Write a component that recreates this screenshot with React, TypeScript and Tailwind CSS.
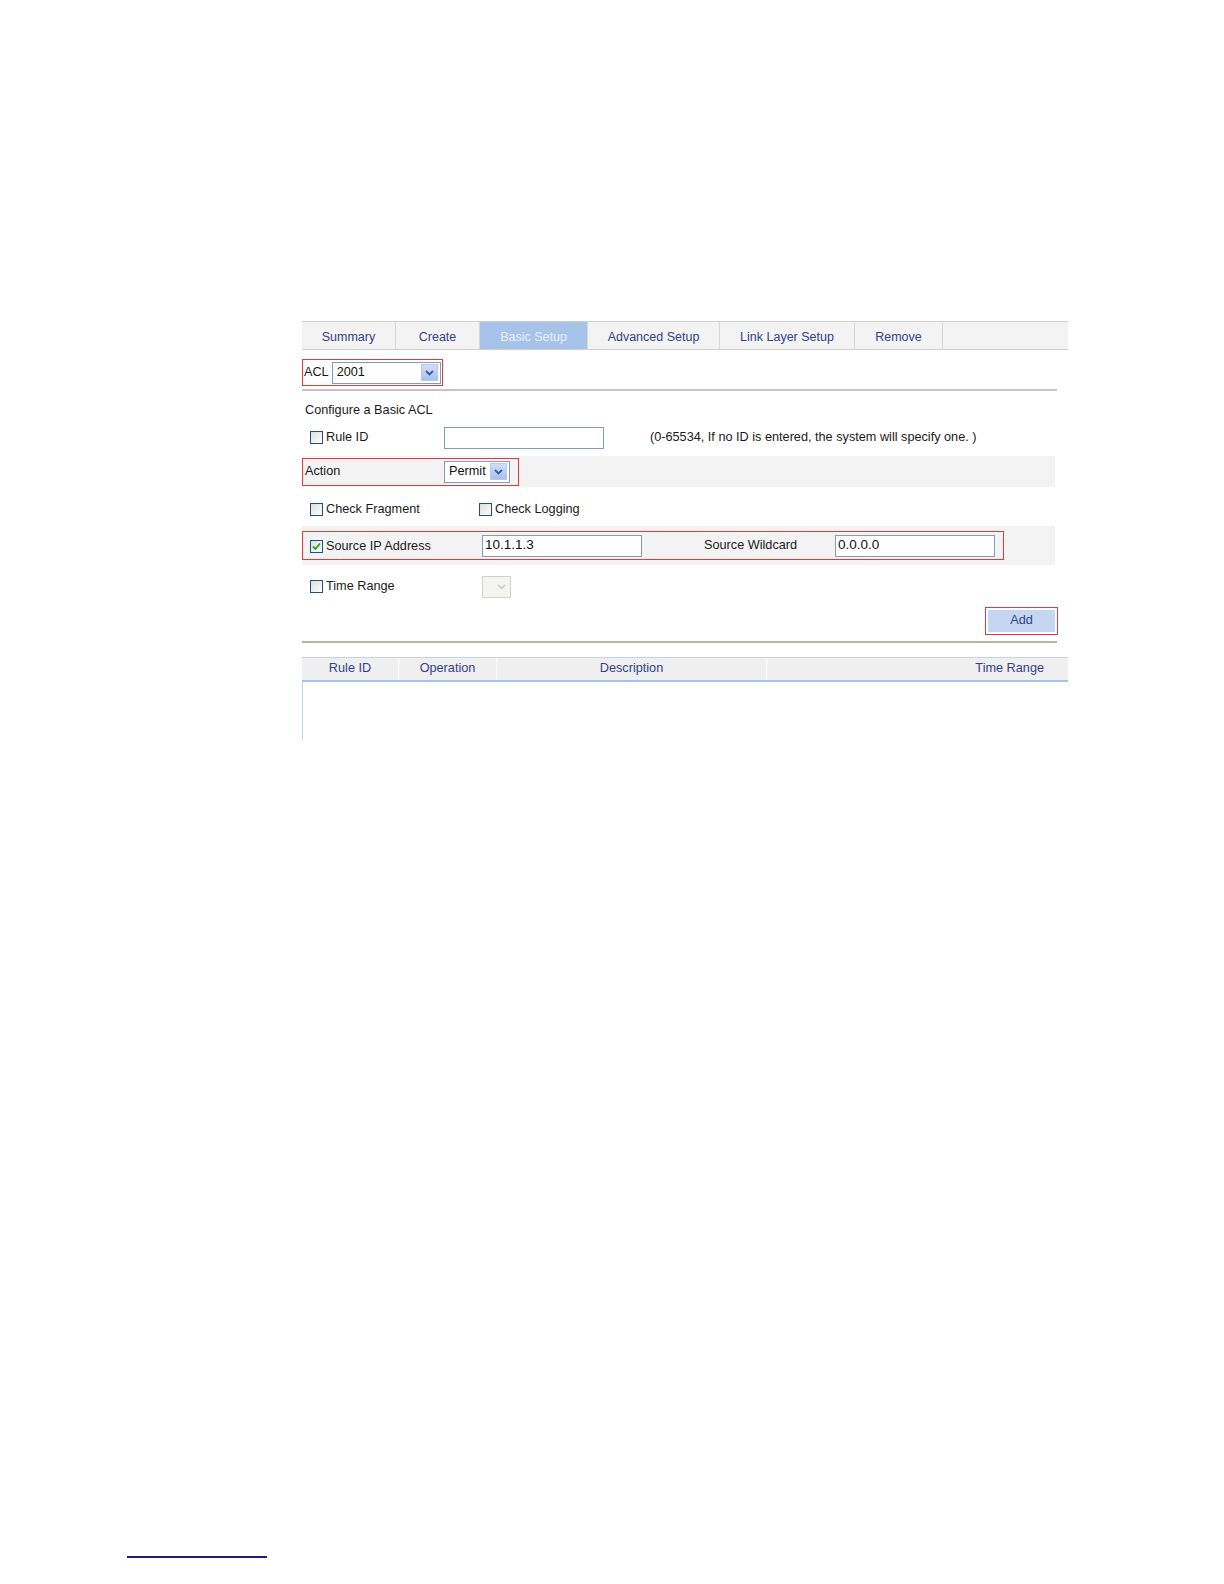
import React from "react";

const Check = ({ checked = false }: { checked?: boolean }) => (
  <span className="inline-flex h-[13px] w-[13px] shrink-0 items-center justify-center border border-[#1c5180] bg-gradient-to-br from-[#dcdcd7] to-[#ffffff]">
    {checked && (
      <svg width="9" height="9" viewBox="0 0 9 9">
        <path d="M1 4.5 L3.5 7 L8 1.5" fill="none" stroke="#21a121" strokeWidth="1.8" />
      </svg>
    )}
  </span>
);

const DropBtn = () => (
  <span className="flex h-[17px] w-[17px] items-center justify-center border border-[#b4c8f0] bg-gradient-to-b from-[#d0def9] to-[#a8c0f0]">
    <svg width="9" height="6" viewBox="0 0 9 6">
      <path d="M1 1 L4.5 4.5 L8 1" fill="none" stroke="#3c5a9c" strokeWidth="1.8" />
    </svg>
  </span>
);

const Select = ({ value, w }: { value: string; w: string }) => (
  <div className={`flex h-[22px] items-center justify-between border border-[#7f9db9] bg-white pl-[4px] pr-[2px] ${w}`}>
    <span className="text-[12.7px] text-[#111]">{value}</span>
    <DropBtn />
  </div>
);

const Input = ({ value = "", w = "w-[160px]" }: { value?: string; w?: string }) => (
  <div className={`flex h-[22px] items-center border border-[#7f9db9] bg-white pl-[2px] text-[13.5px] text-[#111] ${w}`}>
    {value}
  </div>
);

const tabs = [
  { label: "Summary", w: "w-[94px]" },
  { label: "Create", w: "w-[84px]" },
  { label: "Basic Setup", w: "w-[108px]", active: true },
  { label: "Advanced Setup", w: "w-[132px]" },
  { label: "Link Layer Setup", w: "w-[135px]" },
  { label: "Remove", w: "w-[88px]" },
];

export default function App() {
  return (
    <div className="min-h-[1584px] w-[1224px] bg-white [font-family:'Liberation_Sans',Arial,sans-serif] text-[12.7px] text-[#1a1a1a]">
      <div className="pl-[302px] pt-[321px]">
        <div className="w-[766px]">
          {/* Tabs */}
          <div className="flex h-[29px] border-y border-[#cfcfcf] bg-[#f3f3f3]">
            {tabs.map((t) => (
              <div
                key={t.label}
                className={`flex items-center justify-center border-r border-[#d6d6d6] pt-[3px] text-[12.5px] ${t.w} ${
                  t.active ? "bg-[#a8c3e9] text-[#e9eff8]" : "text-[#34408a]"
                }`}
              >
                {t.label}
              </div>
            ))}
            <div className="flex-1" />
          </div>

          {/* ACL */}
          <div className="mt-[9px] flex h-[27px] w-[141px] items-center border border-[#e3393c] pl-[1px]">
            <span className="mr-[3px]">ACL</span>
            <Select value="2001" w="w-[109px]" />
          </div>

          <div className="mt-[3px] h-[2px] w-[755px] bg-[#c4c4c4]" />

          <div className="mt-[11px] pl-[3px] leading-[16px]">Configure a Basic ACL</div>

          {/* Rule ID */}
          <div className="mt-[9px] flex h-[22px] items-center">
            <div className="flex w-[142px] items-center gap-[3px] pl-[8px]">
              <Check />
              <span>Rule ID</span>
            </div>
            <Input />
            <span className="ml-[46px]">(0-65534, If no ID is entered, the system will specify one. )</span>
          </div>

          {/* Action */}
          <div className="mt-[7px] flex h-[31px] w-[753px] items-center bg-[#f3f3f3]">
            <div className="flex h-[28px] w-[217px] items-center border border-[#e3393c]">
              <span className="w-[141px] pl-[2px]">Action</span>
              <Select value="Permit" w="w-[66px]" />
            </div>
          </div>

          {/* Check row */}
          <div className="mt-[12px] flex h-[22px] items-center">
            <div className="flex w-[177px] items-center gap-[3px] pl-[8px]">
              <Check />
              <span>Check Fragment</span>
            </div>
            <div className="flex items-center gap-[3px]">
              <Check />
              <span>Check Logging</span>
            </div>
          </div>

          {/* Source IP */}
          <div className="mt-[5px] flex h-[39px] w-[753px] items-center bg-[#f3f3f3]">
            <div className="flex h-[29px] w-[702px] items-center border border-[#e3393c]">
              <div className="flex w-[179px] items-center gap-[3px] pl-[7px] pt-[2px]">
                <Check checked />
                <span>Source IP Address</span>
              </div>
              <Input value="10.1.1.3" />
              <span className="ml-[62px] w-[131px]">Source Wildcard</span>
              <Input value="0.0.0.0" />
            </div>
          </div>

          {/* Time Range */}
          <div className="mt-[11px] flex h-[22px] items-center">
            <div className="flex w-[180px] items-center gap-[3px] pl-[8px]">
              <Check />
              <span>Time Range</span>
            </div>
            <div className="flex h-[22px] w-[29px] items-center justify-end border border-[#d4d3c8] bg-[#f4f4f0] pr-[4px]">
              <svg width="9" height="6" viewBox="0 0 9 6">
                <path d="M1 1 L4.5 4.5 L8 1" fill="none" stroke="#c9c9c0" strokeWidth="1.5" />
              </svg>
            </div>
          </div>

          {/* Add */}
          <div className="mt-[9px] flex w-[756px] justify-end">
            <div className="flex h-[28px] w-[73px] items-center justify-center border border-[#e3393c] p-[2px]">
              <div className="flex h-full w-full items-center justify-center bg-[#c4d6f1] text-[12.7px] text-[#34408a]">
                Add
              </div>
            </div>
          </div>

          <div className="mt-[6px] h-[2px] w-[755px] bg-[#b5b5a5]" />

          {/* Table */}
          <div className="mt-[14px] flex h-[25px] border-t border-b-2 border-t-[#c0d2ee] border-b-[#a9c0e6] bg-[#efefef] text-[12.7px] text-[#34408a]">
            <div className="flex w-[97px] items-center justify-center border-r border-white">Rule ID</div>
            <div className="flex w-[98px] items-center justify-center border-r border-white">Operation</div>
            <div className="flex w-[270px] items-center justify-center border-r border-white">Description</div>
            <div className="flex flex-1 items-center justify-end pr-[24px]">Time Range</div>
          </div>
          <div className="h-[58px] w-px bg-[#c0d2ee]" />
        </div>
      </div>

      <div className="ml-[127px] mt-[816px] h-[2px] w-[140px] bg-[#1a1a80]" />
    </div>
  );
}
